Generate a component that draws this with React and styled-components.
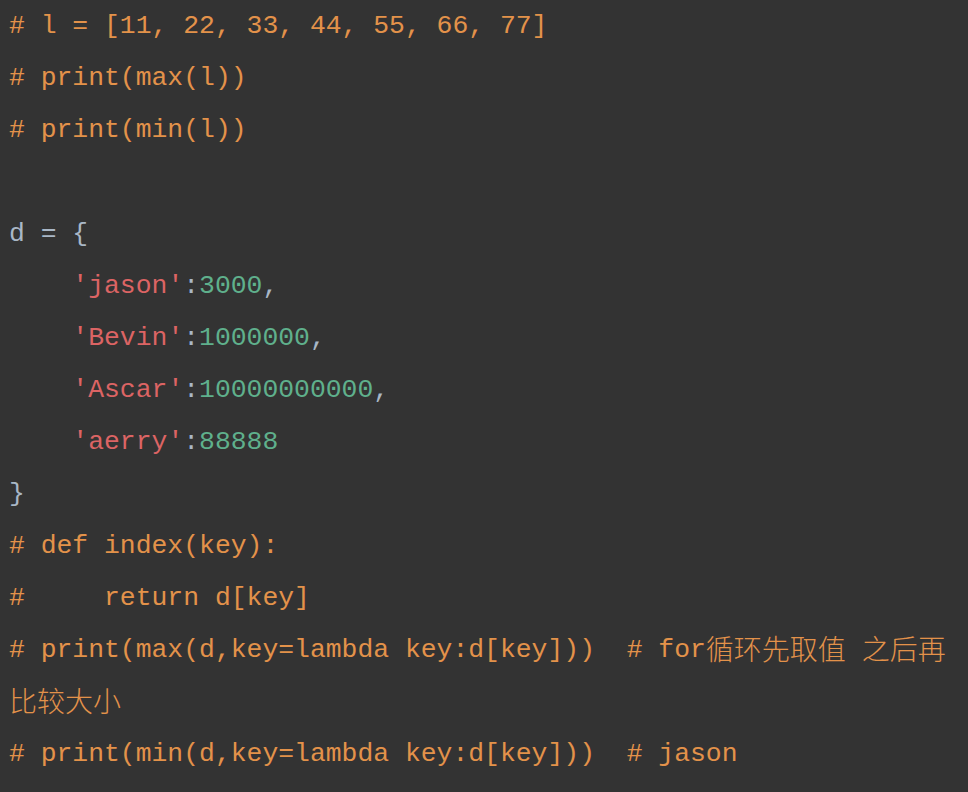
import React from 'react';
import styled, { createGlobalStyle } from 'styled-components';

//--------- GLOBAL ----------//
const GlobalStyle = createGlobalStyle`
  html, body {
    margin: 0;
    padding: 0;
    background: #333333;
  }
`;

//--------- STYLED COMPONENTS ----------//
const CodeBlock = styled.pre`
  margin: 0;
  padding: 0 8px 0 9px;
  width: 968px;
  min-height: 792px;
  box-sizing: border-box;
  background: #333333;
  font-family: 'Liberation Mono', 'Noto Sans CJK SC', monospace;
  font-size: 26.4px;
  line-height: 52px;
  color: #a9b7c6;
  white-space: pre-wrap;
  word-break: break-all;
`;

const Line = styled.div`
  min-height: 52px;
`;

const Token = styled.span`
  color: ${({ kind }) =>
    kind === 'comment'
      ? '#e3924a'
      : kind === 'string'
      ? '#dc6464'
      : kind === 'number'
      ? '#5fb08c'
      : '#a9b7c6'};
`;

const Cjk = styled.span`
  font-family: 'Noto Sans CJK SC', sans-serif;
  font-size: 28px;
  font-weight: 300;
  line-height: 1;
  vertical-align: -3px;
`;

//--------- CODE ----------//
const App = () => {
  return (
    <>
      <GlobalStyle />
      <CodeBlock>
        <Line>
          <Token kind="comment"># l = [11, 22, 33, 44, 55, 66, 77]</Token>
        </Line>
        <Line>
          <Token kind="comment"># print(max(l))</Token>
        </Line>
        <Line>
          <Token kind="comment"># print(min(l))</Token>
        </Line>
        <Line />
        <Line>d = {'{'}</Line>
        <Line>
          {'    '}
          <Token kind="string">'jason'</Token>:<Token kind="number">3000</Token>,
        </Line>
        <Line>
          {'    '}
          <Token kind="string">'Bevin'</Token>:<Token kind="number">1000000</Token>,
        </Line>
        <Line>
          {'    '}
          <Token kind="string">'Ascar'</Token>:<Token kind="number">10000000000</Token>,
        </Line>
        <Line>
          {'    '}
          <Token kind="string">'aerry'</Token>:<Token kind="number">88888</Token>
        </Line>
        <Line>{'}'}</Line>
        <Line>
          <Token kind="comment"># def index(key):</Token>
        </Line>
        <Line>
          <Token kind="comment">#     return d[key]</Token>
        </Line>
        <Line>
          <Token kind="comment">
            # print(max(d,key=lambda key:d[key]))  # for<Cjk>循环先取值</Cjk> <Cjk>之后再比较大小</Cjk>
          </Token>
        </Line>
        <Line>
          <Token kind="comment"># print(min(d,key=lambda key:d[key]))  # jason</Token>
        </Line>
      </CodeBlock>
    </>
  );
};
export default App;
